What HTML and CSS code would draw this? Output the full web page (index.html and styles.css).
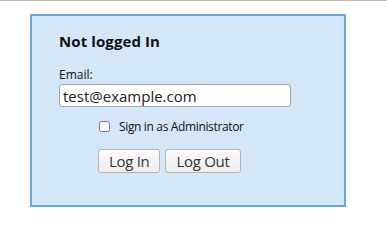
FILE: index.html
```html
<!DOCTYPE html>
<html>
<head>
    <title>Login</title>
    <link rel="stylesheet" href="styles.css">
</head>
<body>
    <div class="topline"></div>
    <div class="login-box">
        <h3>Not logged In</h3>
        <label class="label" for="email">Email:</label>
        <input type="text" id="email" class="input-field" value="test@example.com">
        <div class="admin-row">
            <input type="checkbox" id="admin" class="check">
            <label for="admin">Sign in as Administrator</label>
        </div>
        <div class="button-row">
            <button class="button">Log In</button>
            <button class="button">Log Out</button>
        </div>
    </div>
</body>
</html>
```

FILE: styles.css
```css
body {
    margin: 0;
    font-family: "Open Sans", "Noto Sans", sans-serif;
    background: #fff;
    color: #111;
}
.topline {
    height: 1px;
    background: #bdb9b3;
}
.login-box {
    width: 257px;
    height: 165px;
    margin: 13px 0 0 30px;
    padding: 14px 28px 10px 27px;
    border: 2px solid #6aa6e0;
    background-color: #d4e7f8;
}
h3 {
    margin: 1px 0 15px 0;
    font-size: 15px;
    font-weight: bold;
    letter-spacing: 0.1px;
}
.label {
    display: block;
    font-size: 12px;
    margin-bottom: 1px;
}
.input-field {
    box-sizing: border-box;
    width: 232px;
    height: 23px;
    padding: 0 3px;
    font-family: inherit;
    font-size: 15px;
    color: #222;
    border: 1px solid #a6a6a6;
    border-radius: 3px;
    background: #fff;
}
.admin-row {
    display: flex;
    align-items: center;
    margin: 11px 0 0 40px;
    font-size: 12px;
    letter-spacing: -0.35px;
}
.check {
    width: 11px;
    height: 11px;
    margin: 0 9px 0 0;
}
.button-row {
    display: flex;
    gap: 5px;
    margin: 14px 0 0 39px;
}
.button {
    height: 24px;
    padding: 0 10px;
    font-family: inherit;
    font-size: 15px;
    letter-spacing: -0.3px;
    color: #333;
    border: 1px solid #b4b4b4;
    border-radius: 3px;
    background: linear-gradient(#fbfbfb, #ececec);
}
```
